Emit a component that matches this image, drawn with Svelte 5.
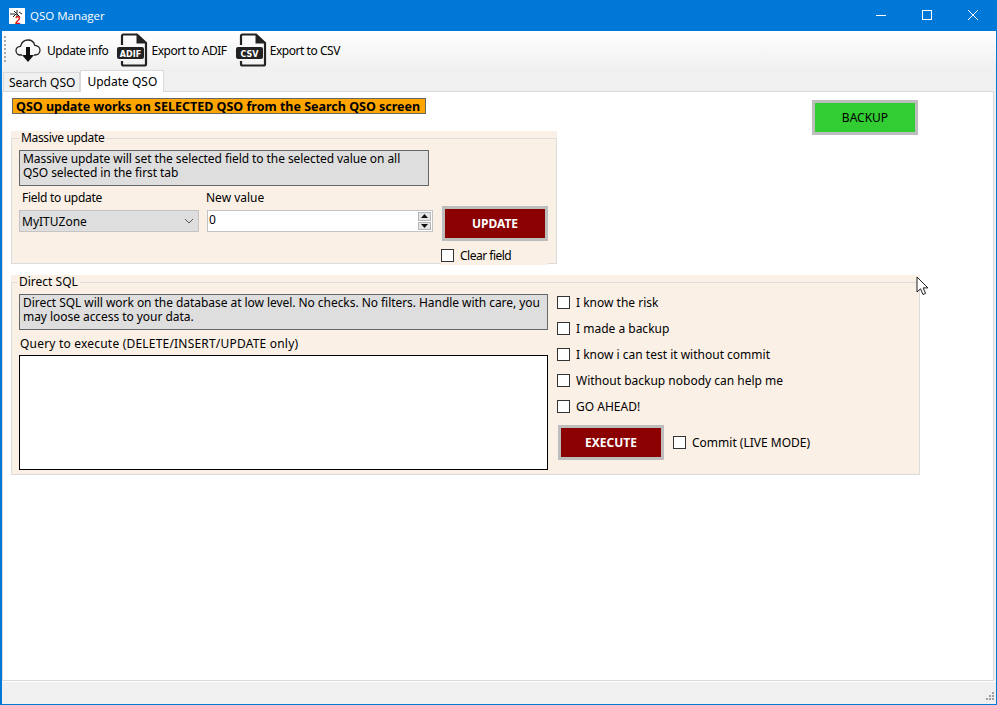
<script>
	const risks = ['I know the risk', 'I made a backup', 'I know i can test it without commit', 'Without backup nobody can help me', 'GO AHEAD!'];
</script>

<div class="window">
	<header class="titlebar">
		<svg class="appicon" width="16" height="16" viewBox="0 0 16 16">
			<rect width="16" height="16" fill="#fff" />
			<path d="M1 6h5M8 2v7M5 3l6 6M4 9l3-3M10 4l3 2" stroke="#222" stroke-width="1" fill="none" />
			<text x="6" y="15.500" class="icon-two">2</text>
		</svg>
		<span class="title">QSO Manager</span>
		<div class="winbtns">
			<svg width="46" height="31" viewBox="0 0 46 31"><path d="M18 15.500h10" stroke="#fff" /></svg>
			<svg width="46" height="31" viewBox="0 0 46 31"><rect x="18.500" y="10.500" width="9" height="9" fill="none" stroke="#fff" /></svg>
			<svg width="46" height="31" viewBox="0 0 46 31"><path d="M18 10l10 10M28 10l-10 10" stroke="#fff" /></svg>
		</div>
	</header>

	<nav class="toolbar">
		<div class="grip"></div>
		<button class="tool first">
			<svg width="26" height="26" viewBox="0 0 26 26">
				<path d="M7 18H5.500C3 18 1 16 1 13.500S3 9.500 5.500 9.300C6.500 5.500 9.500 3 13 3c3.500 0 6 2.200 6.800 5.300 2.800.2 5.200 2.200 5.200 5s-2.200 4.700-5 4.700h-1" fill="none" stroke="#222" stroke-width="1.300" />
				<path d="M11 10h4v8h4l-6 7-6-7h4z" fill="#111" />
			</svg>
			<span>Update info</span>
		</button>
		<button class="tool">
			<svg width="34" height="34" viewBox="0 0 34 34">
				<path d="M6 12V3a1.500 1.500 0 0 1 1.500-1.500H21L30 10v21a1.500 1.500 0 0 1-1.500 1.500h-21A1.500 1.500 0 0 1 6 31v-3" fill="none" stroke="#222" stroke-width="2.200" />
				<path d="M20.500 2v8.500H30z" fill="#222" />
				<rect x="1" y="14" width="27" height="12" rx="2" fill="#222" />
				<text x="14.500" y="24" class="file-tag">ADIF</text>
			</svg>
			<span>Export to ADIF</span>
		</button>
		<button class="tool">
			<svg width="34" height="34" viewBox="0 0 34 34">
				<path d="M6 12V3a1.500 1.500 0 0 1 1.500-1.500H21L30 10v21a1.500 1.500 0 0 1-1.500 1.500h-21A1.500 1.500 0 0 1 6 31v-3" fill="none" stroke="#222" stroke-width="2.200" />
				<path d="M20.500 2v8.500H30z" fill="#222" />
				<rect x="1" y="14" width="27" height="12" rx="2" fill="#222" />
				<text x="14.500" y="24" class="file-tag">CSV</text>
			</svg>
			<span>Export to CSV</span>
		</button>
	</nav>

	<div class="tabs">
		<div class="tab">Search QSO</div>
		<div class="tab active">Update QSO</div>
	</div>

	<main class="pane">
		<div class="top-row">
			<div class="banner">QSO update works on SELECTED QSO from the Search QSO screen</div>
			<button class="action backup">BACKUP</button>
		</div>

		<section class="group massive">
			<fieldset>
				<legend>Massive update</legend>
				<p class="note massive-note">Massive update will set the selected field to the selected value on all QSO selected in the first tab</p>
				<div class="massive-row">
					<div class="field">
						<span class="label field-label">Field to update</span>
						<div class="select">
							<span>MyITUZone</span>
							<svg width="10" height="6" viewBox="0 0 10 6"><path d="M1 1l4 4 4-4" fill="none" stroke="#555" /></svg>
						</div>
					</div>
					<div class="field">
						<span class="label new-value">New value</span>
						<div class="spin">
							<span>0</span>
							<div class="spin-btns">
								<i><svg width="7" height="4" viewBox="0 0 7 4"><path d="M3.500 0L7 4H0z" fill="#111" /></svg></i>
								<i><svg width="7" height="4" viewBox="0 0 7 4"><path d="M3.500 4L7 0H0z" fill="#111" /></svg></i>
							</div>
						</div>
					</div>
					<div class="update-col">
						<button class="action danger">UPDATE</button>
						<label class="check"><b></b>Clear field</label>
					</div>
				</div>
			</fieldset>
		</section>

		<section class="group direct">
			<fieldset>
				<legend>Direct SQL</legend>
				<div class="direct-cols">
					<div class="query">
						<p class="note direct-note">Direct SQL will work on the database at low level. No checks. No filters. Handle with care, you may loose access to your data.</p>
						<span class="label query-label">Query to execute (DELETE/INSERT/UPDATE only)</span>
						<div class="textarea"></div>
					</div>
					<div class="risks">
						{#each risks as risk}
							<label class="check"><b></b>{risk}</label>
						{/each}
						<div class="exec-row">
							<button class="action danger">EXECUTE</button>
							<label class="check"><b></b>Commit (LIVE MODE)</label>
						</div>
					</div>
				</div>
			</fieldset>
		</section>
	</main>

	<footer class="status">
		<svg width="12" height="12" viewBox="0 0 12 12" fill="#a0a0a0">
			<rect x="9" y="1" width="2" height="2" /><rect x="6" y="4" width="2" height="2" /><rect x="9" y="4" width="2" height="2" />
			<rect x="3" y="7" width="2" height="2" /><rect x="6" y="7" width="2" height="2" /><rect x="9" y="7" width="2" height="2" />
		</svg>
	</footer>

	<svg class="cursor" width="14" height="20" viewBox="0 0 14 20">
		<path d="M1 1v15l3.500-3.200 2.500 5.700 2.600-1.100-2.500-5.500h4.800z" fill="#fff" stroke="#222" stroke-width="1" />
	</svg>
</div>

<style>
	:global(body) {
		margin: 0;
		background: #fff;
	}

	.window {
		position: relative;
		width: 997px;
		height: 705px;
		box-sizing: border-box;
		display: flex;
		flex-direction: column;
		border: solid #0078d7;
		border-width: 0 1px 1px 2px;
		background: #f0f0f0;
		overflow: hidden;
		font-family: 'Noto Sans', sans-serif;
		font-size: 12px;
		color: #000;
	}

	.titlebar {
		height: 31px;
		flex: none;
		margin-left: -2px;
		margin-right: -1px;
		display: flex;
		align-items: center;
		padding-left: 9px;
		background: #0078d7;
		color: #fff;
	}

	.icon-two {
		font-family: 'Liberation Sans', sans-serif;
		font-size: 10px;
		font-weight: 700;
		fill: #e01010;
	}

	.title {
		margin-left: 5px;
		font-family: 'Open Sans', sans-serif;
		font-size: 11.500px;
	}

	.winbtns {
		margin-left: auto;
		display: flex;
		margin-right: 1px;
	}

	.toolbar {
		height: 38px;
		flex: none;
		display: flex;
		align-items: center;
		background: linear-gradient(#fff, #f0f0f0);
		padding-left: 2px;
	}

	.grip {
		width: 2px;
		height: 28px;
		background: repeating-linear-gradient(#a8a8a8 0 2px, transparent 2px 4px);
		margin-right: 9px;
	}

	.tool {
		display: flex;
		align-items: center;
		gap: 1px;
		padding: 0;
		margin-right: 8px;
		border: 0;
		background: none;
		font: inherit;
		letter-spacing: -0.450px;
		color: inherit;
	}

	.tool.first {
		gap: 6px;
	}

	.file-tag {
		font-family: 'DejaVu Sans', sans-serif;
		font-size: 8px;
		font-weight: 700;
		letter-spacing: 0;
		fill: #fff;
		text-anchor: middle;
	}

	.tabs {
		height: 22px;
		flex: none;
		display: flex;
		align-items: flex-end;
		padding-left: 1px;
		position: relative;
		z-index: 1;
	}

	.tab {
		height: 19px;
		padding: 0 4px 0 5px;
		display: flex;
		align-items: center;
		box-sizing: border-box;
		border: 1px solid #d9d9d9;
		border-bottom: 0;
		background: #f0f0f0;
	}

	.tab.active {
		height: 22px;
		background: #fff;
		padding: 0 6px;
		margin-bottom: -1px;
	}

	.pane {
		flex: 1;
		min-height: 0;
		background: #fff;
		border: 1px solid #d9d9d9;
		margin-right: 2px;
		padding: 6px 0 0 8px;
	}

	.top-row {
		display: flex;
		align-items: flex-start;
		height: 33px;
	}

	.banner {
		box-sizing: border-box;
		width: 414px;
		height: 16px;
		line-height: 15px;
		padding-left: 3px;
		margin-left: 1px;
		background: #ffa500;
		border: 1px solid #666;
		font-size: 12.500px;
		font-weight: 700;
		white-space: nowrap;
	}

	.action {
		box-sizing: border-box;
		width: 106px;
		height: 35px;
		padding: 0;
		border: 3px solid #bdbdbd;
		font: inherit;
	}

	.backup {
		margin: 2px 0 0 386px;
		background: #32cd32;
		color: #000;
	}

	.danger {
		background: #8b0000;
		color: #fff;
		font-weight: 700;
	}

	.group {
		background: #faf0e6;
		box-sizing: border-box;
	}

	fieldset {
		margin: 0;
		padding: 0 0 0 7px;
		border: 1px solid #dcdcdc;
		height: 100%;
		box-sizing: border-box;
	}

	legend {
		padding: 0 2px;
		height: 14px;
		line-height: 14px;
	}

	.massive legend {
		letter-spacing: -0.350px;
	}

	.direct legend {
		margin-left: -2px;
	}

	.massive {
		width: 546px;
		height: 133px;
	}

	.note {
		box-sizing: border-box;
		margin: 0;
		height: 36px;
		padding: 1px 2px 1px 3px;
		background: #dedede;
		border: 1px solid #666;
		line-height: 14px;
		letter-spacing: -0.070px;
	}

	.direct-note {
		letter-spacing: -0.050px;
	}

	.massive-note {
		width: 410px;
		margin-top: 5px;
	}

	.massive-row {
		display: flex;
		align-items: flex-start;
		margin-top: 5px;
	}

	.field {
		display: flex;
		flex-direction: column;
	}

	.label {
		display: block;
		height: 19px;
		line-height: 14px;
		padding-left: 3px;
	}

	.field-label {
		letter-spacing: -0.300px;
	}

	.new-value {
		padding-left: 0;
		margin-left: -1px;
	}

	.field:nth-child(2) {
		margin-left: 8px;
	}

	.select {
		box-sizing: border-box;
		width: 180px;
		height: 22px;
		display: flex;
		align-items: center;
		justify-content: space-between;
		padding: 0 4px 0 2px;
		background: #dedede;
		border: 1px solid #c4c4c4;
	}

	.spin {
		box-sizing: border-box;
		width: 226px;
		height: 22px;
		display: flex;
		justify-content: space-between;
		padding: 0 1px;
		background: #fff;
		border: 1px solid #c4c4c4;
	}

	.spin-btns {
		width: 13px;
		display: flex;
		flex-direction: column;
		gap: 1px;
		padding: 1px 0;
	}

	.spin-btns i {
		flex: 1;
		display: flex;
		align-items: center;
		justify-content: center;
		background: #e6e6e6;
		border: 1px solid #b5b5b5;
	}

	.update-col {
		margin: 15px 0 0 9px;
		display: flex;
		flex-direction: column;
	}

	/* label box hides the frame line below it, as in the original form */
	.update-col .check {
		height: 16px;
		align-items: flex-start;
		margin: 8px 0 0 -1px;
		padding-right: 7px;
		background: #faf0e6;
		line-height: 13px;
		letter-spacing: -0.500px;
	}

	.check {
		display: flex;
		align-items: center;
		gap: 6px;
		height: 13px;
		white-space: nowrap;
	}

	.check b {
		box-sizing: border-box;
		width: 13px;
		height: 13px;
		background: #fff;
		border: 1px solid #333;
	}

	.direct {
		width: 909px;
		height: 200px;
		margin-top: 11px;
	}

	.direct-cols {
		display: flex;
		gap: 9px;
		margin-top: 5px;
	}

	.query {
		width: 529px;
	}

	.query-label {
		margin-top: 7px;
		height: 18px;
		padding-left: 1px;
		letter-spacing: 0.200px;
	}

	.textarea {
		box-sizing: border-box;
		height: 115px;
		background: #fff;
		border: 1px solid #000;
	}

	.risks {
		display: flex;
		flex-direction: column;
		gap: 13px;
		padding-top: 2px;
	}

	.exec-row {
		display: flex;
		align-items: center;
		gap: 9px;
		margin: -1px 0 0 1px;
	}

	.exec-row .check {
		margin-top: -1px;
	}

	.status {
		height: 21px;
		flex: none;
		display: flex;
		justify-content: flex-end;
		align-items: flex-end;
		padding: 0 1px 1px 0;
		border-top: 1px solid #fff;
	}

	.cursor {
		position: absolute;
		left: 914px;
		top: 276px;
	}
</style>
